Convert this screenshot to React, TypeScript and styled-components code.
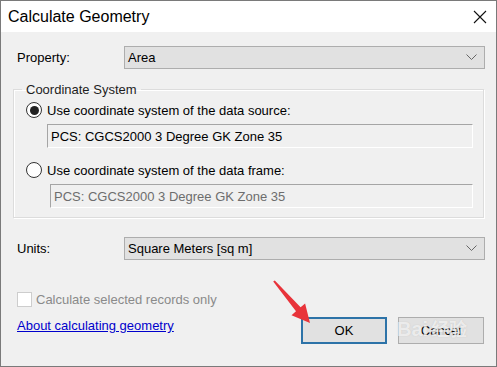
import React from 'react'
import styled, { createGlobalStyle } from 'styled-components'

const Global = createGlobalStyle`
  html, body { margin: 0; padding: 0; background: #fff; }
  body { font-family: 'Liberation Sans', Arial, sans-serif; }
`

const Window = styled.div`
  position: relative;
  width: 497px;
  height: 367px;
  box-sizing: border-box;
  border: 1px solid #7a7a7a;
  background: #f0f0f0;
  display: flex;
  flex-direction: column;
  overflow: hidden;
`

const TitleBar = styled.div`
  height: 31px;
  background: #fff;
  display: flex;
  align-items: center;
  justify-content: space-between;
  padding: 0 9px 0 7px;
  flex-shrink: 0;
`

const Title = styled.span`
  font-size: 16px;
  color: #000;
  margin-top: 1px;
`

const Body = styled.div`
  flex: 1;
  display: flex;
  flex-direction: column;
  padding: 14px 12px 0 12px;
  font-size: 13px;
  color: #000;
`

const FieldRow = styled.div`
  display: flex;
  align-items: center;
  height: 23px;
  margin-top: ${(p: { top: number }) => p.top}px;
`

const Label = styled.span`
  width: 107px;
  padding-left: 4px;
`

const Select = styled.div`
  flex: 1;
  height: 23px;
  box-sizing: border-box;
  margin-right: -1px;
  border: 1px solid #adadad;
  background: #e1e1e1;
  display: flex;
  align-items: center;
  justify-content: space-between;
  padding: 0 7px 0 3px;
`

const Group = styled.fieldset`
  margin: 13px 0 0 0;
  padding: 0 0 9px 0;
  height: 136px;
  box-sizing: border-box;
  border: 1px solid #dcdcdc;
  box-shadow: inset 1px 1px 0 #fff, 1px 1px 0 #fff;
  min-width: 0;
  width: 471px;
`

const Legend = styled.legend`
  margin-left: 8px;
  padding: 0 4px;
  color: #1e1e1e;
`

const RadioRow = styled.label`
  display: flex;
  align-items: center;
  gap: 5px;
  margin: ${(p: { top: number }) => p.top}px 0 0 12px;
  height: 16px;
`

const Radio = styled.span<{ checked?: boolean }>`
  width: 14px;
  height: 14px;
  border-radius: 50%;
  border: 1px solid #333;
  background: #fff;
  display: flex;
  align-items: center;
  justify-content: center;
  &::after {
    content: '';
    display: ${(p) => (p.checked ? 'block' : 'none')};
    width: 9px;
    height: 9px;
    border-radius: 50%;
    background: #222;
  }
`

const TextBox = styled.div<{ disabled?: boolean; left: number }>`
  margin: 6px 10px 0 ${(p) => p.left}px;
  height: 24px;
  box-sizing: border-box;
  border: 1px solid;
  border-color: #a5a5a5 #fff #fff #a5a5a5;
  padding: 0 3px;
  display: flex;
  align-items: center;
  color: ${(p) => (p.disabled ? '#6d6d6d' : '#000')};
`

const Bottom = styled.div`
  display: flex;
  justify-content: space-between;
  align-items: flex-start;
  margin-top: 31px;
`

const LeftCol = styled.div`
  display: flex;
  flex-direction: column;
  padding-left: 4px;
`

const CheckRow = styled.label`
  display: flex;
  align-items: center;
  gap: 4px;
  color: #8a8a8a;
  height: 16px;
`

const CheckBox = styled.span`
  width: 15px;
  height: 15px;
  box-sizing: border-box;
  border: 1px solid #cdcdcd;
  background: #fff;
`

const Link = styled.a`
  margin-top: 11px;
  color: #0000cc;
  text-decoration: underline;
  cursor: pointer;
`

const Buttons = styled.div`
  display: flex;
  gap: 11px;
  margin-top: 26px;
`

const Button = styled.button<{ primary?: boolean }>`
  width: 86px;
  height: 27px;
  box-sizing: border-box;
  font-family: inherit;
  font-size: 13px;
  color: #000;
  background: #e1e1e1;
  border: ${(p) => (p.primary ? '2px solid #2d73a8' : '1px solid #adadad')};
  padding: 0;
`

const Watermark = styled.div`
  position: absolute;
  left: 396px;
  top: 314px;
  display: flex;
  align-items: baseline;
  gap: 3px;
  color: rgba(255, 255, 255, 0.7);
  font-family: 'Liberation Sans', 'Noto Sans CJK SC', sans-serif;
  font-weight: bold;
  font-size: 20px;
  pointer-events: none;
  text-shadow: 0 0 1px rgba(160, 160, 160, 0.5);
`

const Arrow = styled.svg`
  position: absolute;
  left: 268px;
  top: 276px;
  pointer-events: none;
`

function Chevron() {
  return (
    <svg width="11" height="7" viewBox="0 0 11 7">
      <polyline points="0.5,0.5 5.5,5.5 10.5,0.5" fill="none" stroke="#666" strokeWidth="1" />
    </svg>
  )
}

export default function App() {
  return (
    <>
      <Global />
      <Window>
        <TitleBar>
          <Title>Calculate Geometry</Title>
          <svg width="14" height="14" viewBox="0 0 14 14">
            <path d="M1 1 L13 13 M13 1 L1 13" stroke="#111" strokeWidth="1.1" />
          </svg>
        </TitleBar>
        <Body>
          <FieldRow top={0}>
            <Label>Property:</Label>
            <Select>
              <span>Area</span>
              <Chevron />
            </Select>
          </FieldRow>
          <Group>
            <Legend>Coordinate System</Legend>
            <RadioRow top={5}>
              <Radio checked />
              <span>Use coordinate system of the data source:</span>
            </RadioRow>
            <TextBox left={33}>PCS: CGCS2000 3 Degree GK Zone 35</TextBox>
            <RadioRow top={14}>
              <Radio />
              <span>Use coordinate system of the data frame:</span>
            </RadioRow>
            <TextBox left={36} disabled>PCS: CGCS2000 3 Degree GK Zone 35</TextBox>
          </Group>
          <FieldRow top={19}>
            <Label>Units:</Label>
            <Select>
              <span>Square Meters [sq m]</span>
              <Chevron />
            </Select>
          </FieldRow>
          <Bottom>
            <LeftCol>
              <CheckRow>
                <CheckBox />
                <span>Calculate selected records only</span>
              </CheckRow>
              <Link>About calculating geometry</Link>
            </LeftCol>
            <Buttons>
              <Button primary>OK</Button>
              <Button>Cancel</Button>
            </Buttons>
          </Bottom>
        </Body>
        <Watermark>
          <span>Bai</span>
          <span style={{ fontSize: 18 }}>经验</span>
        </Watermark>
        <Arrow width="48" height="50" viewBox="0 0 48 50">
          <path d="M5.8 3.4 L31.6 30.3 L36.1 26.4 L41 46 L22.5 38.2 L27 34.3 L4.2 4.6 Z" fill="#e8333a" />
        </Arrow>
      </Window>
    </>
  )
}
